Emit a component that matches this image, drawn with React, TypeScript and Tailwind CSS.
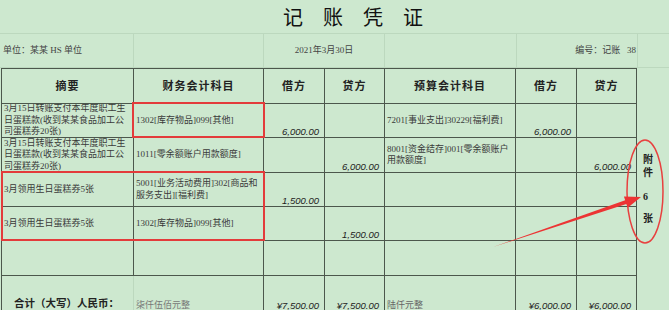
import React from "react";

const B = "border-r border-b border-[#4c574c]";
const AMT =
  "flex items-end justify-end pr-[5px] pb-[0px] font-[family-name:Liberation_Sans,Arial,sans-serif] italic text-[9.5px] leading-[11px] text-[#222]";
const TXT = "flex items-center px-[2px] text-[9px] leading-[11.4px] text-[#3a3a3a] overflow-hidden";
const HEAD = "flex items-center justify-center text-[11px] font-bold text-[#222] tracking-[1px]";

function Lines({ lines }: { lines: string[] }) {
  return (
    <div className="whitespace-nowrap">
      {lines.map((l, i) => (
        <div key={i}>{l}</div>
      ))}
    </div>
  );
}

export default function App() {
  return (
    <div className="relative w-[669px] h-[310px] overflow-hidden bg-[#cde8cf] text-[#333] font-[family-name:Liberation_Serif,Noto_Sans_CJK_SC,serif]">
      {/* title */}
      <div className="h-[34px] border-b border-[#bcd8be] pl-[283px] pt-[5px] text-[20px] leading-[26px] tracking-[20px] font-normal text-[#111] whitespace-nowrap">
        记账凭证
      </div>

      {/* info row */}
      <div className="grid h-[34px] grid-cols-[134px_130px_121px_132px_121px_1fr] border-b border-[#bcd8be] text-[9px] text-[#444]">
        <div className="flex items-center border-r border-[#bcd8be] pl-[3px] whitespace-nowrap">单位：某某 HS 单位</div>
        <div className="border-r border-[#bcd8be]"></div>
        <div className="flex items-center justify-center border-r border-[#bcd8be] whitespace-nowrap">2021年3月30日</div>
        <div className="border-r border-[#bcd8be]"></div>
        <div className="flex items-center justify-end border-r border-[#bcd8be] pr-[1px] whitespace-nowrap">
          编号：记账&nbsp;&nbsp;&nbsp;38
        </div>
        <div></div>
      </div>

      {/* table + side */}
      <div className="flex">
        <div className="ml-[1px] grid grid-cols-[132px_130px_61px_60px_131px_61px_60px] grid-rows-[35px_34px_35px_34px_34px_35px_40px] border-l border-t border-[#4c574c]">
          {/* header */}
          <div className={`${B} ${HEAD}`}>摘要</div>
          <div className={`${B} ${HEAD}`}>财务会计科目</div>
          <div className={`${B} ${HEAD}`}>借方</div>
          <div className={`${B} ${HEAD}`}>贷方</div>
          <div className={`${B} ${HEAD}`}>预算会计科目</div>
          <div className={`${B} ${HEAD}`}>借方</div>
          <div className={`${B} ${HEAD}`}>贷方</div>

          {/* row 1 */}
          <div className={`${B} ${TXT}`}>
            <Lines lines={["3月15日转账支付本年度职工生", "日蛋糕款(收到某某食品加工公", "司蛋糕券20张)"]} />
          </div>
          <div className={`${B} ${TXT}`}>1302[库存物品]099[其他]</div>
          <div className={`${B} ${AMT}`}>6,000.00</div>
          <div className={B}></div>
          <div className={`${B} ${TXT}`}>7201[事业支出]30229[福利费]</div>
          <div className={`${B} ${AMT}`}>6,000.00</div>
          <div className={B}></div>

          {/* row 2 */}
          <div className={`${B} ${TXT}`}>
            <Lines lines={["3月15日转账支付本年度职工生", "日蛋糕款(收到某某食品加工公", "司蛋糕券20张)"]} />
          </div>
          <div className={`${B} ${TXT}`}>1011[零余额账户用款额度]</div>
          <div className={B}></div>
          <div className={`${B} ${AMT}`}>6,000.00</div>
          <div className={`${B} ${TXT}`}>
            <Lines lines={["8001[资金结存]001[零余额账户", "用款额度]"]} />
          </div>
          <div className={B}></div>
          <div className={`${B} ${AMT}`}>6,000.00</div>

          {/* row 3 */}
          <div className={`${B} ${TXT}`}>3月领用生日蛋糕券5张</div>
          <div className={`${B} ${TXT}`}>
            <Lines lines={["5001[业务活动费用]302[商品和", "服务支出][福利费]"]} />
          </div>
          <div className={`${B} ${AMT}`}>1,500.00</div>
          <div className={B}></div>
          <div className={B}></div>
          <div className={B}></div>
          <div className={B}></div>

          {/* row 4 */}
          <div className={`${B} ${TXT}`}>3月领用生日蛋糕券5张</div>
          <div className={`${B} ${TXT}`}>1302[库存物品]099[其他]</div>
          <div className={B}></div>
          <div className={`${B} ${AMT}`}>1,500.00</div>
          <div className={B}></div>
          <div className={B}></div>
          <div className={B}></div>

          {/* row 5 */}
          <div className={B}></div>
          <div className={B}></div>
          <div className={B}></div>
          <div className={B}></div>
          <div className={B}></div>
          <div className={B}></div>
          <div className={B}></div>

          {/* total */}
          <div className="flex items-end border-b border-r border-b-[#4c574c] border-r-[#bcd8be] pb-[5px] pl-[12px] text-[10.5px] font-bold leading-[12px] text-[#222] whitespace-nowrap">
            合计（大写）人民币：
          </div>
          <div className={`${B} flex items-end pb-[4px] pl-[2px] text-[9px] leading-[11px] text-[#777] whitespace-nowrap`}>柒仟伍佰元整</div>
          <div className={`${B} ${AMT} pb-[4px] pr-[2px]`}>¥7,500.00</div>
          <div className={`${B} ${AMT} pb-[4px] pr-[2px]`}>¥7,500.00</div>
          <div className={`${B} flex items-end pb-[4px] pl-[2px] text-[9px] leading-[11px] text-[#666] whitespace-nowrap`}>陆仟元整</div>
          <div className={`${B} ${AMT} pb-[4px] pr-[3px]`}>¥6,000.00</div>
          <div className={`${B} ${AMT} pb-[4px] pr-[3px]`}>¥6,000.00</div>
        </div>

        {/* side: attachments */}
        <div className="flex-1 pl-[6px] pt-[85px] text-[10px] font-bold leading-[13px] text-[#222]">
          <div>附</div>
          <div>件</div>
          <div className="mt-[11px]">6</div>
          <div className="mt-[9px]">张</div>
        </div>
      </div>

      {/* red annotation boxes */}
      <div className="pointer-events-none absolute left-[132px] top-[102px] h-[36px] w-[133px] border-2 border-[#e33b3b]"></div>
      <div className="pointer-events-none absolute left-[1px] top-[171px] h-[70px] w-[264px] border-2 border-[#e33b3b]"></div>

      {/* ellipse + arrow */}
      <svg className="pointer-events-none absolute left-0 top-0" width="669" height="310" viewBox="0 0 669 310">
        <ellipse cx="645" cy="191.5" rx="18" ry="51.5" fill="none" stroke="#e8403f" strokeWidth="1.5" />
        <polygon
          points="493,247 626.4,204.0 627.7,207.8 641,197 623.9,196.4 625.2,200.2"
          fill="#ec3434"
        />
      </svg>
    </div>
  );
}
